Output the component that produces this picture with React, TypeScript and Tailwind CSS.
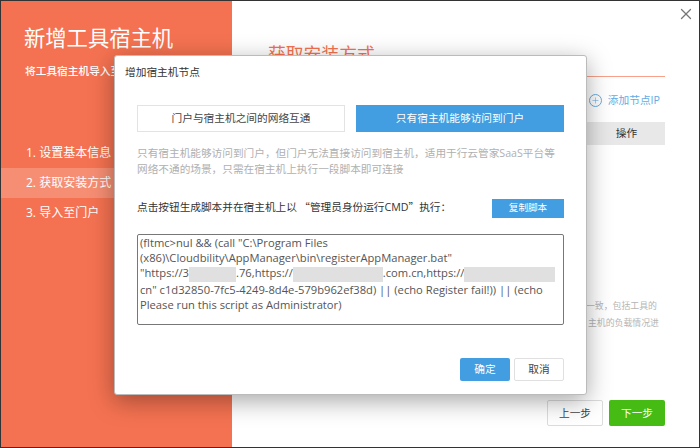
import React from 'react';
import { Plus, X } from 'lucide-react';

const font = { fontFamily: '"Open Sans", "Noto Sans CJK SC", sans-serif' };

function Redacted({ className }: { className: string }) {
  return <span className={`inline-block h-[15px] align-middle bg-[#e0e0e0] ${className}`} />;
}

function SidePanel() {
  return (
    <div className="w-[231px] h-full bg-[#f47251] text-white flex flex-col shrink-0">
      <div className="pl-[23px] pt-[23px] text-[21.3px] leading-[28px]">新增工具宿主机</div>
      <div className="pl-[24px] pt-[11px] text-[10.7px] leading-[16px] font-medium whitespace-nowrap">
        将工具宿主机导入至门户
      </div>
      <div className="mt-[59px] flex flex-col text-[12px]">
        <div className="h-[30px] pl-[25px] flex items-center">1. 设置基本信息</div>
        <div className="h-[30px] pl-[25px] flex items-center bg-white/20">2. 获取安装方式</div>
        <div className="h-[30px] pl-[25px] flex items-center">3. 导入至门户</div>
      </div>
    </div>
  );
}

function MainPanel() {
  return (
    <div className="flex-1 h-full bg-white relative flex flex-col pl-[36px] pr-[34px]">
      <X className="absolute right-[4px] top-[4px] w-[18px] h-[18px] text-[#777]" strokeWidth={1.75} />
      <div className="pt-[41px] text-[17.8px] leading-[24px] text-[#f47251]">获取安装方式</div>
      <div className="mt-[10px] h-[1px] bg-[#f8a08a]" />
      <div className="mt-[13px] h-[20px] flex items-center justify-end gap-[6px] pr-[4px] text-[10.7px] text-[#62ace6]">
        <span className="w-[13px] h-[13px] rounded-full border border-[#62ace6] flex items-center justify-center">
          <Plus className="w-[9px] h-[9px]" strokeWidth={1.5} />
        </span>
        <span className="mr-px">添加节点IP</span>
      </div>
      <div className="mt-[12px] h-[23px] bg-[#e8e8e8] flex justify-end items-center text-[10.7px] text-[#333]">
        <span className="w-[77px] text-center">操作</span>
      </div>
      <div className="mt-[152px] text-[8.9px] leading-[17px] text-[#b5b5b5] text-right pr-[7px] whitespace-nowrap">
        <div className="pr-[1px]">一致，包括工具的</div>
        <div className="-mr-[1px]">主机的负载情况进</div>
      </div>
      <div className="mt-auto mb-[21px] flex justify-end gap-[6px] text-[10.7px]">
        <button className="w-[56px] h-[26px] bg-white border border-[#dcdcdc] rounded-[2px] text-[#444]">上一步</button>
        <button className="w-[56px] h-[26px] bg-[#46bb14] rounded-[2px] text-white">下一步</button>
      </div>
    </div>
  );
}

function ScriptDialog() {
  return (
    <div className="absolute left-[113px] top-[54px] w-[473px] h-[340px] bg-white rounded-[3px] border border-[#bbb] shadow-[0_6px_24px_rgba(0,0,0,0.35)] flex flex-col px-[22px]">
      <div className="-ml-[12px] pt-[8px] text-[10.7px] leading-[16px] text-[#333]">增加宿主机节点</div>
      <div className="mt-[25px] flex gap-[11px] text-[10.7px]">
        <button className="w-[208px] h-[27px] border border-[#e3e3e3] text-[#444]">门户与宿主机之间的网络互通</button>
        <button className="w-[208px] h-[27px] bg-[#429ee0] text-white">只有宿主机能够访问到门户</button>
      </div>
      <p className="mt-[13px] text-[10.67px] leading-[16px] text-[#b0b0b0] whitespace-nowrap">
        只有宿主机能够访问到门户，但门户无法直接访问到宿主机，适用于行云管家SaaS平台等
        <br />
        网络不通的场景，只需在宿主机上执行一段脚本即可连接
      </p>
      <div className="mt-[20px] h-[20px] flex items-center justify-between text-[10.67px] text-[#333]">
        <span className="whitespace-nowrap">
          点击按钮生成脚本并在宿主机上以<span className="font-['Noto_Sans_CJK_SC']"> “</span>管理员身份运行CMD<span className="font-['Noto_Sans_CJK_SC']">”</span>执行：
        </span>
        <button className="mt-[3px] w-[72px] h-[19px] bg-[#429ee0] text-white text-[9.6px]">复制脚本</button>
      </div>
      <div className="mt-[17px] w-[427px] h-[91px] border border-[#777] rounded-[2px] px-[2px] text-[11.2px] leading-[15.2px] text-[#555] whitespace-nowrap overflow-hidden">
        <div>(fltmc&gt;nul &amp;&amp; (call "C:\Program Files</div>
        <div>(x86)\Cloudbility\AppManager\bin\registerAppManager.bat"</div>
        <div>
          "https://3<Redacted className="w-[47px]" />.76,https://<Redacted className="w-[90px]" />.com.cn,https://<Redacted className="w-[91px]" />
        </div>
        <div>cn" c1d32850-7fc5-4249-8d4e-579b962ef38d) || (echo Register fail!)) || (echo</div>
        <div>Please run this script as Administrator)</div>
      </div>
      <div className="mt-[33px] flex justify-end gap-[4px] text-[10.7px]">
        <button className="w-[50px] h-[23px] bg-[#429ee0] rounded-[2px] text-white">确定</button>
        <button className="w-[50px] h-[23px] border border-[#e0e0e0] rounded-[2px] text-[#444]">取消</button>
      </div>
    </div>
  );
}

export default function App() {
  return (
    <div className="relative w-[700px] h-[448px] border border-[#333] flex overflow-hidden" style={font}>
      <SidePanel />
      <MainPanel />
      <ScriptDialog />
    </div>
  );
}
